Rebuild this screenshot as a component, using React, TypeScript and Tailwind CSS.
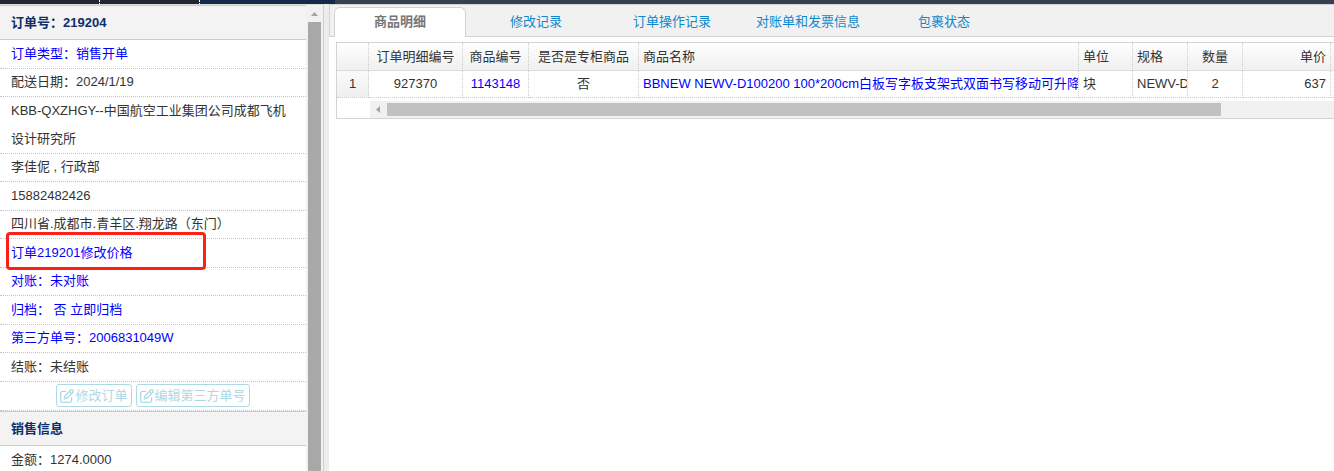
import React from "react";
import { FaRegPenToSquare } from "react-icons/fa6";

type Info = { text: string; link?: boolean; marked?: boolean };

const infoRows: Info[] = [
  { text: "订单类型：销售开单", link: true },
  { text: "配送日期：2024/1/19" },
  { text: "KBB-QXZHGY--中国航空工业集团公司成都飞机设计研究所" },
  { text: "李佳伲 , 行政部" },
  { text: "15882482426" },
  { text: "四川省.成都市.青羊区.翔龙路（东门）" },
  { text: "订单219201修改价格", link: true, marked: true },
  { text: "对账：未对账", link: true },
  { text: "归档： 否 立即归档", link: true },
  { text: "第三方单号：2006831049W", link: true },
  { text: "结账：未结账" },
];

const tabs = ["商品明细", "修改记录", "订单操作记录", "对账单和发票信息", "包裹状态"];

const columns = [
  { title: "订单明细编号", value: "927370", width: "w-[94px]", align: "text-center" },
  { title: "商品编号", value: "1143148", width: "w-[66px]", align: "text-center", link: true },
  { title: "是否是专柜商品", value: "否", width: "w-[110px]", align: "text-center" },
  {
    title: "商品名称",
    value: "BBNEW NEWV-D100200 100*200cm白板写字板支架式双面书写移动可升降",
    width: "w-[440px]",
    align: "text-left",
    link: true,
  },
  { title: "单位", value: "块", width: "w-[54px]", align: "text-left" },
  { title: "规格", value: "NEWV-D", width: "w-[55px]", align: "text-left" },
  { title: "数量", value: "2", width: "w-[55px]", align: "text-center" },
  { title: "单价", value: "637", width: "w-[88px]", align: "text-right" },
];

function TopBar() {
  return (
    <div className="flex h-1 shrink-0 bg-[#35424e]">
      <div className="w-[100px] border-r border-dotted border-white bg-[#22272f]" />
      <div className="w-[100px] border-r border-dotted border-white bg-[#22272f]" />
      <div className="w-[135px] bg-[#14284c]" />
    </div>
  );
}

function SectionTitle({ children }: { children: React.ReactNode }) {
  return (
    <h2 className="flex h-[35px] items-center border-y border-[#ccc] bg-[#f3f3f3] px-[11px] font-bold text-[#0e2d6b]">
      {children}
    </h2>
  );
}

function InfoRow({ text, link, marked }: Info) {
  return (
    <li className="relative border-b border-dotted border-[#c4c4c4] pr-3 pl-[11px] leading-7 odd:-mb-px">
      {link ? (
        <a href="#" className="text-[#0000ff]">
          {text}
        </a>
      ) : (
        text
      )}
      {marked && (
        <span className="pointer-events-none absolute -top-[7px] left-[6px] h-[38px] w-[200px] rounded-[4px] border-[3px] border-[#fb2116]" />
      )}
    </li>
  );
}

function ActionButton({ children }: { children: React.ReactNode }) {
  return (
    <button
      type="button"
      className="flex h-[23px] items-center gap-px rounded-[3px] border border-[#add8e6] px-[3px] text-[#add8e6]"
    >
      <FaRegPenToSquare className="size-[14px]" />
      {children}
    </button>
  );
}

function Sidebar() {
  return (
    <aside className="flex w-[324px] shrink-0 overflow-hidden border-t border-r border-t-[#dcdcdc] border-r-[#cfcfcf]">
      <div className="min-w-0 flex-1">
        <SectionTitle>订单号：219204</SectionTitle>
        <ul>
          {infoRows.map((row) => (
            <InfoRow key={row.text} {...row} />
          ))}
        </ul>
        <div className="flex h-[30px] items-center justify-center gap-1 border-b border-dotted border-[#c4c4c4]">
          <ActionButton>修改订单</ActionButton>
          <ActionButton>编辑第三方单号</ActionButton>
        </div>
        <SectionTitle>销售信息</SectionTitle>
        <ul>
          <InfoRow text="金额：1274.0000" />
        </ul>
      </div>
      <div className="flex w-[17px] flex-col items-center bg-[#f1f1f1]">
        <svg viewBox="0 0 17 17" className="h-[17px] w-[17px] shrink-0">
          <path d="M5 11 L8.5 7 L12 11 Z" fill="#a3a3a3" />
        </svg>
        <div className="w-[13px] flex-1 bg-[#a8a8a8]" />
      </div>
    </aside>
  );
}

function TabBar() {
  return (
    <div
      role="tablist"
      className="flex h-[33px] gap-1 border-t border-b border-l border-[#d3d3d3] bg-[#f1f1f1] pt-[2px] pl-1"
    >
      {tabs.map((tab, i) => (
        <button
          key={tab}
          type="button"
          role="tab"
          aria-selected={i === 0}
          className={
            i === 0
              ? "-mb-px w-[132px] shrink-0 rounded-t-[6px] border border-b-0 border-[#d3d3d3] bg-white pb-[2px] font-bold text-[#777]"
              : "w-[132px] shrink-0 text-[#0d88cc]"
          }
        >
          {tab}
        </button>
      ))}
    </div>
  );
}

function ItemTable() {
  return (
    <div className="mt-[5px] ml-[7px] overflow-hidden border-y border-l border-[#d3d3d3]">
      <table className="w-full min-w-[994px] table-fixed border-separate border-spacing-0">
        <thead>
          <tr className="h-7 bg-linear-to-b from-white to-[#efefef]">
            <th className="w-8 border-r border-b border-r-[#ccc] border-b-[#ddd] [border-right-style:dotted]" />
            {columns.map((c) => (
              <th
                key={c.title}
                className={`${c.width} ${c.align} overflow-hidden border-r border-b border-r-[#ccc] border-b-[#ddd] p-0 px-1 font-normal whitespace-nowrap [border-right-style:dotted]`}
              >
                {c.title}
              </th>
            ))}
            <th className="border-b border-[#ddd] p-0" />
          </tr>
        </thead>
        <tbody>
          <tr className="h-[27px]">
            <td className="border-r border-b border-dotted border-[#ccc] bg-linear-to-b from-[#fafafa] to-[#efefef] p-0 text-center">
              1
            </td>
            {columns.map((c) => (
              <td
                key={c.title}
                className={`${c.align} overflow-hidden border-r border-b border-dotted border-[#ccc] p-0 px-1 whitespace-nowrap`}
              >
                {c.link ? (
                  <a href="#" className="text-[#0000ff]">
                    {c.value}
                  </a>
                ) : (
                  c.value
                )}
              </td>
            ))}
            <td className="border-b border-dotted border-[#ccc] p-0" />
          </tr>
        </tbody>
      </table>
      <div className="mt-[3px] ml-[33px] flex h-[17px] items-center bg-[#f1f1f1]">
        <svg viewBox="0 0 17 17" className="h-[17px] w-[17px] shrink-0">
          <path d="M10 5 L6 8.5 L10 12 Z" fill="#a3a3a3" />
        </svg>
        <div className="mr-[113px] h-[13px] flex-1 bg-[#c1c1c1]" />
      </div>
    </div>
  );
}

export default function App() {
  return (
    <div className="flex h-screen flex-col overflow-hidden bg-white font-['Liberation_Sans','Noto_Sans_CJK_SC',sans-serif] text-[13px] leading-5 text-[#333]">
      <TopBar />
      <div className="flex min-h-0 flex-1">
        <Sidebar />
        <div className="w-[5px] shrink-0 bg-[#ececec]" />
        <main className="min-w-0 flex-1">
          <TabBar />
          <ItemTable />
        </main>
      </div>
    </div>
  );
}
